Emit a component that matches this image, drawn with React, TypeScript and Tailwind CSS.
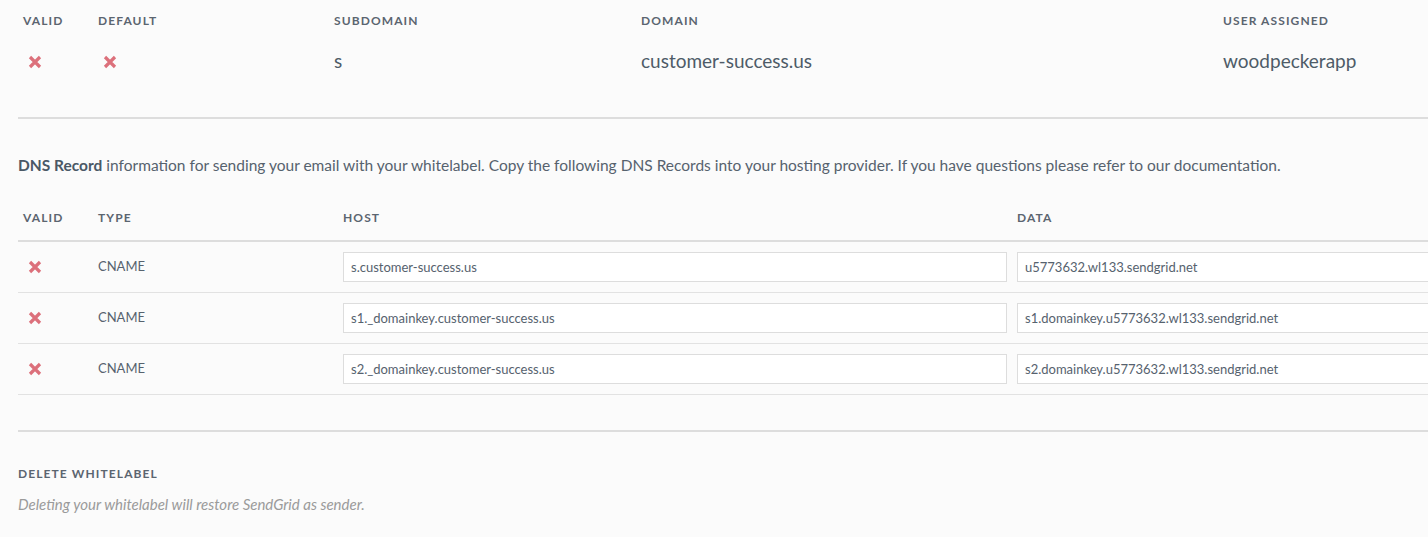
import React from "react";

const records = [
  {
    type: "CNAME",
    host: "s.customer-success.us",
    data: "u5773632.wl133.sendgrid.net",
  },
  {
    type: "CNAME",
    host: "s1._domainkey.customer-success.us",
    data: "s1.domainkey.u5773632.wl133.sendgrid.net",
  },
  {
    type: "CNAME",
    host: "s2._domainkey.customer-success.us",
    data: "s2.domainkey.u5773632.wl133.sendgrid.net",
  },
];

function Cross() {
  return (
    <svg width="14" height="14" viewBox="0 0 14 14" className="block">
      <path d="M2 2 L12 12 M12 2 L2 12" stroke="#dc707b" strokeWidth="3.2" />
    </svg>
  );
}

const head = "text-[12px] font-bold tracking-[1.1px] uppercase text-[#5b6570]";

export default function App() {
  return (
    <div className="w-[1428px] h-[537px] overflow-hidden bg-[#fbfbfb] font-['Lato',sans-serif] text-[#4e5b68]">
      <div className="pl-[18px] w-[1800px]">
        {/* whitelabel summary */}
        <div className="flex h-[41px] items-center">
          <div className={`w-[75px] pl-[5px] ${head}`}>Valid</div>
          <div className={`w-[236px] pl-[5px] ${head}`}>Default</div>
          <div className={`w-[307px] pl-[5px] ${head}`}>Subdomain</div>
          <div className={`w-[582px] pl-[5px] ${head}`}>Domain</div>
          <div className={`pl-[5px] ${head}`}>User Assigned</div>
        </div>
        <div className="flex h-[41px] items-center text-[19px]">
          <div className="w-[75px] pl-[10px]">
            <Cross />
          </div>
          <div className="w-[236px] pl-[10px]">
            <Cross />
          </div>
          <div className="w-[307px] pl-[5px]">s</div>
          <div className="w-[582px] pl-[5px]">customer-success.us</div>
          <div className="pl-[5px]">woodpeckerapp</div>
        </div>

        <div className="mt-[35px] h-[2px] bg-[#dddddd]" />

        <p className="mt-[34px] h-[24px] leading-[24px] text-[15.5px] text-[#56626e]">
          <span className="font-bold text-[#4a5866]">DNS Record</span> information for sending your email with
          your whitelabel. Copy the following DNS Records into your hosting provider. If you have questions please
          refer to our documentation.
        </p>

        {/* dns records */}
        <div className="mt-[19px] flex h-[46px] items-center border-b-2 border-[#dddddd]">
          <div className={`w-[75px] pl-[5px] ${head}`}>Valid</div>
          <div className={`w-[250px] pl-[5px] ${head}`}>Type</div>
          <div className={`w-[674px] ${head}`}>Host</div>
          <div className={`${head}`}>Data</div>
        </div>
        {records.map((r, i) => (
          <div key={i} className="flex h-[51px] items-center border-b border-[#e2e2e2]">
            <div className="w-[75px] pl-[10px]">
              <Cross />
            </div>
            <div className="w-[250px] pl-[5px] text-[13px] text-[#56626e]">{r.type}</div>
            <div className="w-[674px] pr-[10px]">
              <div className="h-[30px] border border-[#dddddd] bg-white px-[7px] text-[13px] leading-[28px] text-[#56626e]">
                {r.host}
              </div>
            </div>
            <div className="w-[664px]">
              <div className="h-[30px] border border-[#dddddd] bg-white px-[7px] text-[13px] leading-[28px] text-[#56626e]">
                {r.data}
              </div>
            </div>
          </div>
        ))}

        <div className="mt-[35px] h-[2px] bg-[#dddddd]" />

        <h3 className={`mt-[32px] leading-[20px] ${head}`}>Delete Whitelabel</h3>
        <p className="mt-[10px] leading-[20px] text-[15px] italic text-[#9a9a9a]">
          Deleting your whitelabel will restore SendGrid as sender.
        </p>
      </div>
    </div>
  );
}
